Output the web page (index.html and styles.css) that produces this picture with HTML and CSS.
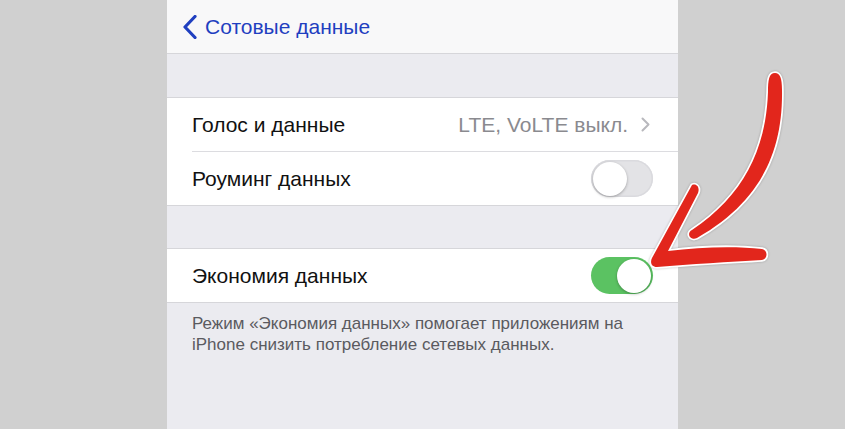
FILE: index.html
```html
<!DOCTYPE html>
<html lang="ru">
<head>
    <meta charset="UTF-8">
    <title>Сотовые данные</title>
    <link rel="stylesheet" href="styles.css">
</head>
<body>
    <div class="screen">
        <div class="nav-bar">
            <span class="back">
                <svg class="back-icon" width="14" height="24" viewBox="0 0 14 24">
                    <path d="M12 1.5 L2 12 L12 22.5" fill="none" stroke="#1f3fc0" stroke-width="3.2" stroke-linecap="round" stroke-linejoin="round"/>
                </svg>
                Сотовые данные
            </span>
        </div>

        <div class="spacer"></div>
        <div class="group">
            <div class="row">
                <span class="label">Голос и данные</span>
                <span class="detail">LTE, VoLTE выкл.</span>
                <svg class="chevron" width="9" height="15" viewBox="0 0 9 15">
                    <path d="M1.5 1.5 L7.5 7.5 L1.5 13.5" fill="none" stroke="#b8b8bd" stroke-width="2" stroke-linecap="round" stroke-linejoin="round"/>
                </svg>
            </div>
            <div class="row">
                <span class="label">Роуминг данных</span>
                <span class="switch"><span class="knob"></span></span>
            </div>
        </div>

        <div class="spacer small"></div>
        <div class="group">
            <div class="row">
                <span class="label">Экономия данных</span>
                <span class="switch on"><span class="knob"></span></span>
            </div>
        </div>
        <p class="footnote">Режим «Экономия данных» помогает приложениям на iPhone снизить потребление сетевых данных.</p>
    </div>

    <!-- hand drawn arrow pointing at the switch -->
    <svg class="arrow" width="845" height="429" viewBox="0 0 845 429">
        <g fill="#e2261c" stroke="#fff" stroke-width="3.5" stroke-linejoin="round" paint-order="stroke">
            <path d="M775 73 C780 73 782 78 782 90 C783 150 762 201 697 238 C690 241 686 233 692 230 C743 196 766 150 768 92 C768 80 769 73 775 73 Z"/>
            <path d="M692 185 C697 183 700 188 698 193 L668 251 C700 247 735 246 762 249 C768 250 768 259 762 260 C730 262 690 264 657 267 C651 267 650 262 652 258 Z"/>
        </g>
    </svg>
</body>
</html>
```

FILE: styles.css
```css
body {
    margin: 0;
    background: #d0d0d0;
    font-family: 'Liberation Sans', Arial, sans-serif;
    height: 429px;
    overflow: hidden;
}
.screen {
    width: 511px;
    height: 429px;
    margin: 0 auto;
    background: #ebebf0;
}
.nav-bar {
    height: 53px;
    background: #f8f8f9;
    border-bottom: 1px solid #d6d6da;
    display: flex;
    align-items: center;
    padding-left: 16px;
}
.back {
    display: flex;
    align-items: center;
    gap: 8px;
    color: #1f3fc0;
    font-size: 21px;
    margin-top: 1px;
}
.spacer {
    height: 43px;
}
.spacer.small {
    height: 42px;
}
.group {
    background: #fff;
    border-top: 1px solid #d6d6da;
    border-bottom: 1px solid #d6d6da;
    padding-left: 25px;
}
.row {
    height: 53px;
    display: flex;
    align-items: center;
    padding-right: 25px;
    font-size: 21px;
    color: #111;
}
.row + .row {
    border-top: 1px solid #dcdce0;
}
.label {
    flex: 1;
}
.detail {
    color: #8a8a8f;
    margin-right: 13px;
}
.chevron {
    margin-right: 3px;
}
.switch {
    width: 62px;
    height: 37px;
    border-radius: 19px;
    background: #e3e3e6;
    box-shadow: inset 0 0 0 1.5px #dadade;
    display: flex;
    align-items: center;
    padding: 0 2px;
    box-sizing: border-box;
}
.knob {
    width: 34px;
    height: 34px;
    border-radius: 50%;
    background: #fff;
    box-shadow: 0 1px 3px rgba(0, 0, 0, 0.3);
}
.switch.on {
    background: #5bc262;
    box-shadow: none;
    justify-content: flex-end;
}
.footnote {
    margin: 0;
    padding: 10px 25px 0;
    font-size: 17px;
    line-height: 21px;
    color: #5a5a5f;
}
.arrow {
    position: absolute;
    left: 0;
    top: 0;
    filter: drop-shadow(0 0 1px rgba(0, 0, 0, 0.25));
}
```
